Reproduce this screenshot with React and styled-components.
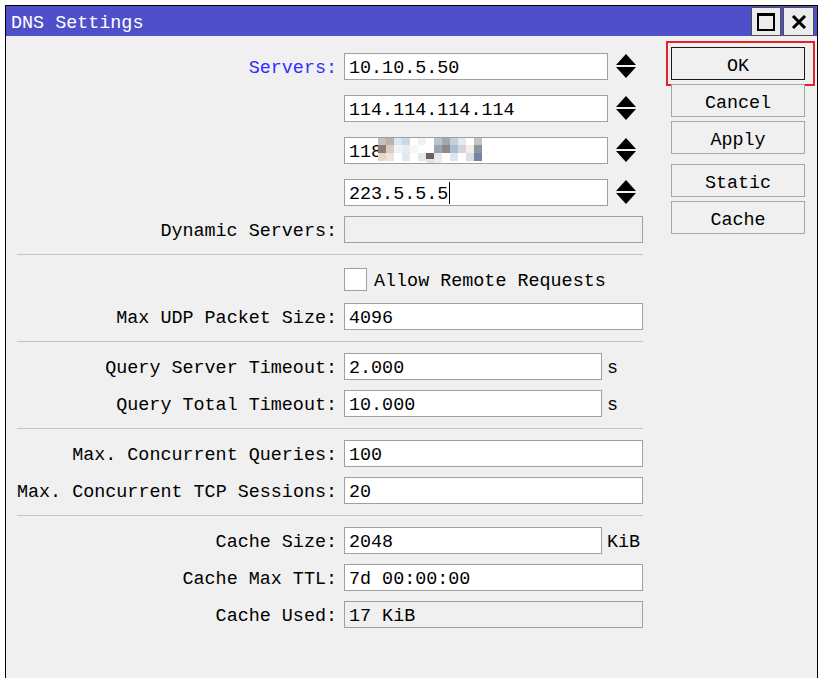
import React from "react";
import styled, { createGlobalStyle } from "styled-components";

const Global = createGlobalStyle`
  html, body { margin: 0; padding: 0; background: #ffffff; }
  body { padding: 5px 0 0 5px; overflow: hidden; }
  * { box-sizing: border-box; }
`;

const FONT = `"Liberation Mono", "DejaVu Sans Mono", monospace`;

const Window = styled.div`
  width: 813px;
  height: 700px;
  border: 1px solid #000;
  background: #f0f0f0;
  font-family: ${FONT};
  font-size: 18.4px;
  color: #000;
  display: flex;
  flex-direction: column;
`;

const TitleBar = styled.div`
  height: 30px;
  background: #4f50c9;
  display: flex;
  align-items: center;
  padding: 0 3px 0 5px;
  flex-shrink: 0;
`;

const Title = styled.div`
  color: #fff;
  flex: 1;
  line-height: 24px;
  padding-top: 5px;
`;

const TitleBtn = styled.div`
  width: ${(p) => p.$w}px;
  height: 29px;
  margin-top: 1px;
  margin-left: 2px;
  background: #ececec;
  border: 1px solid #505050;
  display: flex;
  align-items: center;
  justify-content: center;
`;

const Body = styled.div`
  display: flex;
  padding: 0 12px 0 11px;
  gap: 28px;
`;

const Form = styled.div`
  width: 626px;
  padding-top: 17px;
  display: flex;
  flex-direction: column;
  gap: 10px;
`;

const ServerGroup = styled.div`
  display: flex;
  flex-direction: column;
  gap: 15px;
`;

const Row = styled.div`
  display: grid;
  grid-template-columns: 320px 299px;
  column-gap: 7px;
  height: 27px;
  align-items: center;
`;

const Label = styled.div`
  text-align: right;
  white-space: pre;
  padding-top: 4px;
  color: ${(p) => (p.$accent ? "#2f2fff" : "#000")};
`;

const Field = styled.div`
  display: flex;
  align-items: center;
  height: 27px;
`;

const Input = styled.div`
  width: ${(p) => (p.$w ? `${p.$w}px` : "100%")};
  height: 27px;
  border: 1px solid #a0a0a0;
  background: ${(p) => (p.$disabled ? "#f0f0f0" : "#ffffff")};
  padding: 3px 0 0 4px;
  display: flex;
  align-items: center;
  white-space: pre;
  overflow: hidden;
  flex-shrink: 0;
`;

const Caret = styled.span`
  display: inline-block;
  width: 1px;
  height: 22px;
  margin-top: -3px;
  background: #000;
  margin-left: 1px;
`;

const Unit = styled.span`
  margin-left: 5px;
  padding-top: 4px;
`;

const CheckText = styled.span`
  padding-top: 4px;
`;

const Spinner = styled.svg`
  margin-left: 8px;
  flex-shrink: 0;
`;

const Separator = styled.div`
  height: 1px;
  background: #c4c4c4;
  margin: 1px 0;
`;

const Check = styled.div`
  width: 23px;
  height: 23px;
  border: 1px solid #a0a0a0;
  background: #fff;
  margin-right: 7px;
`;

const Buttons = styled.div`
  width: 134px;
  padding-top: 11px;
  display: flex;
  flex-direction: column;
  gap: 4px;
`;

const Button = styled.div`
  position: relative;
  height: 33px;
  padding-top: 5px;
  border: 1px solid ${(p) => (p.$default ? "#1a1a1a" : "#a6a6a6")};
  background: #f0f0f0;
  display: flex;
  align-items: center;
  justify-content: center;
  margin-top: ${(p) => (p.$spaced ? "6px" : "0")};
  ${(p) =>
    p.$highlight &&
    `&::after {
      content: "";
      position: absolute;
      top: -7px; bottom: -7px; left: -6px; right: -11px;
      border: 2px solid #e8202a;
      pointer-events: none;
    }`}
`;

const Mosaic = styled.svg`
  margin-left: -4px;
  margin-top: -3px;
  flex-shrink: 0;
`;

const SpinnerIcon = () => (
  <Spinner width="20" height="25" viewBox="0 0 20 25">
    <polygon points="10,0 20,11 0,11" fill="#000" />
    <polygon points="0,13 20,13 10,24" fill="#000" />
  </Spinner>
);

const mosaicCells = [
  [0, 0, "#c9bfb6"], [8, 0, "#b8b2aa"], [16, 0, "#dde6ec"], [24, 0, "#c6dbe8"],
  [40, 0, "#eef3f6"], [56, 0, "#b9c4cf"], [64, 0, "#a2a8b1"], [72, 0, "#c9cfd6"], [80, 0, "#e7e7ee"], [96, 0, "#bcc6cc"],
  [0, 8, "#8c7c72"], [8, 8, "#d9ccc2"], [16, 8, "#eef2f4"], [24, 8, "#e5edf3"], [32, 8, "#f4f6f8"],
  [56, 8, "#9aa4b3"], [64, 8, "#8f8a88"], [72, 8, "#a9bfd5"], [80, 8, "#d8d1dc"], [88, 8, "#f3efe4"], [96, 8, "#8d9798"],
  [0, 16, "#e6d6c6"], [8, 16, "#f0e4d8"], [24, 16, "#e0e8f0"], [40, 16, "#e5e9ec"],
  [48, 16, "#6b625e"], [56, 16, "#e8e8e8"], [72, 16, "#dfe5ec"], [88, 16, "#d8dfe8"], [96, 16, "#7484a6"],
  [48, 22, "#e4e4e4"], [56, 22, "#eeeeee"],
];

const MosaicIcon = () => (
  <Mosaic width="104" height="28" viewBox="0 0 104 28">
    {mosaicCells.map(([x, y, c], i) => (
      <rect key={i} x={x} y={y} width="8" height="8" fill={c} />
    ))}
  </Mosaic>
);

const FormRow = ({ label, accent, children }) => (
  <Row>
    <Label $accent={accent}>{label}</Label>
    <Field>{children}</Field>
  </Row>
);

export default function App() {
  return (
    <>
      <Global />
      <Window>
        <TitleBar>
          <Title>DNS Settings</Title>
          <TitleBtn $w={30}>
            <svg width="18" height="18" viewBox="0 0 18 18">
              <rect x="1" y="1.5" width="16" height="15.5" fill="none" stroke="#000" strokeWidth="2" />
              <rect x="0" y="0" width="18" height="3" fill="#000" />
            </svg>
          </TitleBtn>
          <TitleBtn $w={31}>
            <svg width="16" height="14" viewBox="0 0 16 14">
              <path d="M2 1 L14 13 M14 1 L2 13" stroke="#000" strokeWidth="3" />
            </svg>
          </TitleBtn>
        </TitleBar>
        <Body>
          <Form>
            <ServerGroup>
              <FormRow label="Servers:" accent>
                <Input $w={264}>10.10.5.50</Input>
                <SpinnerIcon />
              </FormRow>
              <FormRow label="">
                <Input $w={264}>114.114.114.114</Input>
                <SpinnerIcon />
              </FormRow>
              <FormRow label="">
                <Input $w={264}>
                  118
                  <MosaicIcon />
                </Input>
                <SpinnerIcon />
              </FormRow>
              <FormRow label="">
                <Input $w={264}>
                  223.5.5.5
                  <Caret />
                </Input>
                <SpinnerIcon />
              </FormRow>
            </ServerGroup>
            <FormRow label="Dynamic Servers:">
              <Input $disabled />
            </FormRow>
            <Separator />
            <FormRow label="">
              <Check />
              <CheckText>Allow Remote Requests</CheckText>
            </FormRow>
            <FormRow label="Max UDP Packet Size:">
              <Input>4096</Input>
            </FormRow>
            <Separator />
            <FormRow label="Query Server Timeout:">
              <Input $w={258}>2.000</Input>
              <Unit>s</Unit>
            </FormRow>
            <FormRow label="Query Total Timeout:">
              <Input $w={258}>10.000</Input>
              <Unit>s</Unit>
            </FormRow>
            <Separator />
            <FormRow label="Max. Concurrent Queries:">
              <Input>100</Input>
            </FormRow>
            <FormRow label="Max. Concurrent TCP Sessions:">
              <Input>20</Input>
            </FormRow>
            <Separator />
            <FormRow label="Cache Size:">
              <Input $w={258}>2048</Input>
              <Unit>KiB</Unit>
            </FormRow>
            <FormRow label="Cache Max TTL:">
              <Input>7d 00:00:00</Input>
            </FormRow>
            <FormRow label="Cache Used:">
              <Input $disabled>17 KiB</Input>
            </FormRow>
          </Form>
          <Buttons>
            <Button $default $highlight>OK</Button>
            <Button>Cancel</Button>
            <Button>Apply</Button>
            <Button $spaced>Static</Button>
            <Button>Cache</Button>
          </Buttons>
        </Body>
      </Window>
    </>
  );
}
